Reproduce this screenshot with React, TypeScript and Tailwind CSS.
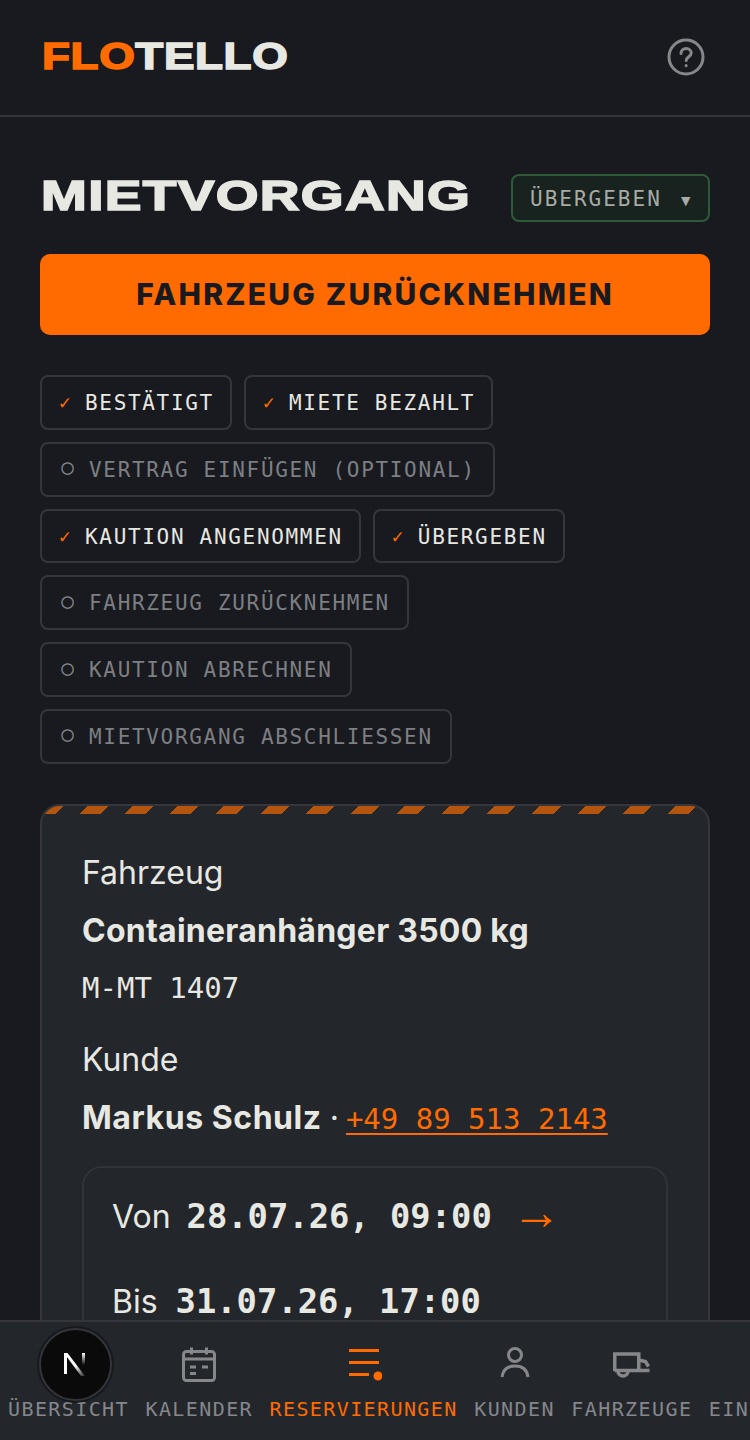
import React from 'react';

const MONO = "font-['DejaVu_Sans_Mono',monospace]";

const steps: { label: string; done: boolean }[] = [
    { label: 'BESTÄTIGT', done: true },
    { label: 'MIETE BEZAHLT', done: true },
    { label: 'VERTRAG EINFÜGEN (OPTIONAL)', done: false },
    { label: 'KAUTION ANGENOMMEN', done: true },
    { label: 'ÜBERGEBEN', done: true },
    { label: 'FAHRZEUG ZURÜCKNEHMEN', done: false },
    { label: 'KAUTION ABRECHNEN', done: false },
    { label: 'MIETVORGANG ABSCHLIESSEN', done: false },
];

const HelpIcon = () => (
    <svg width="38" height="38" viewBox="0 0 38 38" fill="none" stroke="#85878b" strokeWidth="3" strokeLinecap="round">
        <circle cx="19" cy="19" r="17" />
        <path d="M14 15.5c0-3 2.3-5 5.2-5 2.8 0 5 1.9 5 4.4 0 3.7-5 4-5 7.6" />
        <path d="M19.1 27.6v.1" />
    </svg>
);

const CalendarIcon = () => (
    <svg width="36" height="36" viewBox="0 0 36 36" fill="none" stroke="#85878b" strokeWidth="3">
        <rect x="2.5" y="5.5" width="31" height="29" rx="3" />
        <path d="M2.5 13h31M10.500 1.500v7M25.500 1.500v7" />
        <path d="M9 21h6M21 21h6M9 27.500h6" />
    </svg>
);

const ReservationIcon = () => (
    <svg width="36" height="36" viewBox="0 0 36 36" fill="none" stroke="#ff6b00" strokeWidth="3">
        <path d="M3 4.500h30M3 16.500h30M3 28.500h20" />
        <circle cx="32" cy="30" r="3" fill="#ff6b00" />
    </svg>
);

const UserIcon = () => (
    <svg width="36" height="36" viewBox="0 0 36 36" fill="none" stroke="#85878b" strokeWidth="3">
        <circle cx="18" cy="9" r="6.500" />
        <path d="M5 31c1-7.500 6-11 13-11s12 3.500 13 11" />
    </svg>
);

const TrailerIcon = () => (
    <svg width="38" height="36" viewBox="0 0 38 36" fill="none" stroke="#85878b" strokeWidth="3.500">
        <path d="M1.750 25V8h24v17" />
        <path d="M1.500 24.500h35" />
        <path d="M25.500 14l7 1.500 3 5" />
        <path d="M5 25a5 5 0 0 0 10 0" />
    </svg>
);

const navItems = [
    { label: 'ÜBERSICHT', icon: <div className="h-9 w-9" /> },
    { label: 'KALENDER', icon: <CalendarIcon /> },
    { label: 'RESERVIERUNGEN', icon: <ReservationIcon />, active: true },
    { label: 'KUNDEN', icon: <UserIcon /> },
    { label: 'FAHRZEUGE', icon: <TrailerIcon /> },
    { label: 'EINSTELLUNGEN', icon: <div className="h-9 w-9" /> },
];

const App: React.FC = () => {
    return (
        <div className="relative h-screen overflow-hidden bg-[#181a1f] font-['Inter',sans-serif] text-[#e8e8e3]">
            <header className="flex h-[117px] items-center justify-between border-b-2 border-[#34363b] pl-[42px] pr-[45px] pb-[1px]">
                <div className="origin-left scale-x-[1.27] font-['Liberation_Sans',sans-serif] text-[36px] font-bold leading-none tracking-[0.5px] [-webkit-text-stroke:1.5px_currentColor]">
                    <span className="text-[#ff6b00]">FLO</span>TELLO
                </div>
                <HelpIcon />
            </header>

            <main className="px-10 pt-[57px]">
                <div className="flex items-center justify-between">
                    <h1 className="-mt-[4px] ml-[1px] origin-left scale-x-[1.31] font-['Liberation_Sans',sans-serif] text-[42px] font-bold leading-none tracking-[1px] [-webkit-text-stroke:1.6px_currentColor]">
                        MIETVORGANG
                    </h1>
                    <div className={`${MONO} flex h-12 w-[199px] items-center justify-between rounded-lg border-2 border-[#2e5a3a] bg-[#18221e] pl-[17px] pr-[15px] pt-[3px] text-[21px] tracking-[2px] text-[#a8aaa6]`}>
                        <span>ÜBERGEBEN</span>
                        <span className="text-[24px] leading-none tracking-normal">▾</span>
                    </div>
                </div>

                <button className="mt-8 flex h-[81px] w-full items-center justify-center rounded-[10px] bg-[#ff6b00] text-[30px] font-extrabold tracking-[2.2px] text-[#181a1f]">
                    FAHRZEUG ZURÜCKNEHMEN
                </button>

                <div className="mt-10 flex flex-wrap gap-x-3 gap-y-3">
                    {steps.map(step => (
                        <div key={step.label} className={`${MONO} flex h-[54.75px] items-center gap-[13px] rounded-lg border-2 border-[#34363b] pl-[17px] pt-[3px] text-[21px] tracking-[1.68px] ${step.done ? 'pr-[16px] text-[#e8e8e3]' : 'pr-[17px] text-[#7d7f83]'}`}>
                            {step.done ? (
                                <span className="-mt-[3px] w-[13px] text-center text-[19px] text-[#ff6b00]">✓</span>
                            ) : (
                                <span className="-mt-[5px] w-[17px] text-center text-[21px] tracking-normal text-[#85878b]">○</span>
                            )}
                            <span>{step.label}</span>
                        </div>
                    ))}
                </div>

                <section className="relative mt-10 overflow-hidden rounded-[20px] border-2 border-[#34363b] bg-[#23262b] px-10 pt-[44px]">
                    <div className="absolute inset-x-0 top-0 h-2 bg-[repeating-linear-gradient(135deg,#b3550f_0_15px,transparent_15px_32px)]" />
                    <p className="text-[32px] leading-[46px]">Fahrzeug</p>
                    <p className="mt-3 text-[32px] font-bold leading-[46px] tracking-[0.25px]">Containeranhänger 3500 kg</p>
                    <p className={`${MONO} mt-[11px] text-[29px] leading-[46px]`}>M-MT 1407</p>
                    <p className="mt-[26px] text-[32px] leading-[46px]">Kunde</p>
                    <p className="mt-3 flex h-[46px] items-baseline text-[32px] leading-[46px]">
                        <span className="font-bold tracking-[0.55px]">Markus Schulz</span>
                        <span className="ml-2 mr-[7px]">·</span>
                        <span className={`${MONO} text-[29px] text-[#ff6b00] underline decoration-[1.5px] underline-offset-4`}>+49 89 513 2143</span>
                    </p>
                    <div className="mt-[25px] rounded-[20px] border-2 border-[#30333a] px-[28px] pt-[26px] pb-10">
                        <div className="flex items-center">
                            <span className="text-[32px] leading-[46px]">Von</span>
                            <span className={`${MONO} ml-4 text-[33.8px] font-bold leading-[46px]`}>28.07.26, 09:00</span>
                            <span className="-mt-[9px] ml-5 font-['Liberation_Sans',sans-serif] text-[50px] leading-[46px] text-[#ff6b00]">→</span>
                        </div>
                        <div className="mt-[39px] flex items-center">
                            <span className="text-[32px] leading-[46px]">Bis</span>
                            <span className={`${MONO} ml-[18px] text-[33.8px] font-bold leading-[46px]`}>31.07.26, 17:00</span>
                        </div>
                    </div>
                </section>
            </main>

            <nav className="absolute inset-x-0 bottom-0 flex h-[120px] gap-[16.5px] overflow-hidden border-t-2 border-[#34363b] bg-[#23262b] pl-2 pt-[24px]">
                {navItems.map(item => (
                    <div key={item.label} className={`${MONO} flex shrink-0 flex-col items-center gap-[15px] text-[20px] leading-[24px] tracking-[1.4px] ${item.active ? 'text-[#ff6b00]' : 'text-[#85878b]'}`}>
                        {item.icon}
                        <span>{item.label}</span>
                    </div>
                ))}
            </nav>

            {/* dev indicator that sits over the nav */}
            <div className="absolute left-[39px] top-[1328px] flex h-[73px] w-[73px] items-center justify-center rounded-full border-2 border-[#33353a] bg-[#0a0a0a] shadow-[0_0_0_2px_#17191c]">
                <svg width="30" height="30" viewBox="0 0 30 30">
                    <defs>
                        <linearGradient id="nFade" x1="0" y1="0" x2="0" y2="1">
                            <stop offset="0" stopColor="#fff" />
                            <stop offset="0.8" stopColor="#fff" stopOpacity="0" />
                        </linearGradient>
                        <linearGradient id="nDiag" x1="0" y1="0" x2="1" y2="1">
                            <stop offset="0.55" stopColor="#fff" />
                            <stop offset="1" stopColor="#fff" stopOpacity="0.1" />
                        </linearGradient>
                    </defs>
                    <path d="M3 3h3v21H3z" fill="#fff" />
                    <path d="M3 3h3.500L24 26h-4z" fill="url(#nDiag)" />
                    <path d="M21 3h3v15h-3z" fill="url(#nFade)" />
                </svg>
            </div>
        </div>
    );
};

export default App;
